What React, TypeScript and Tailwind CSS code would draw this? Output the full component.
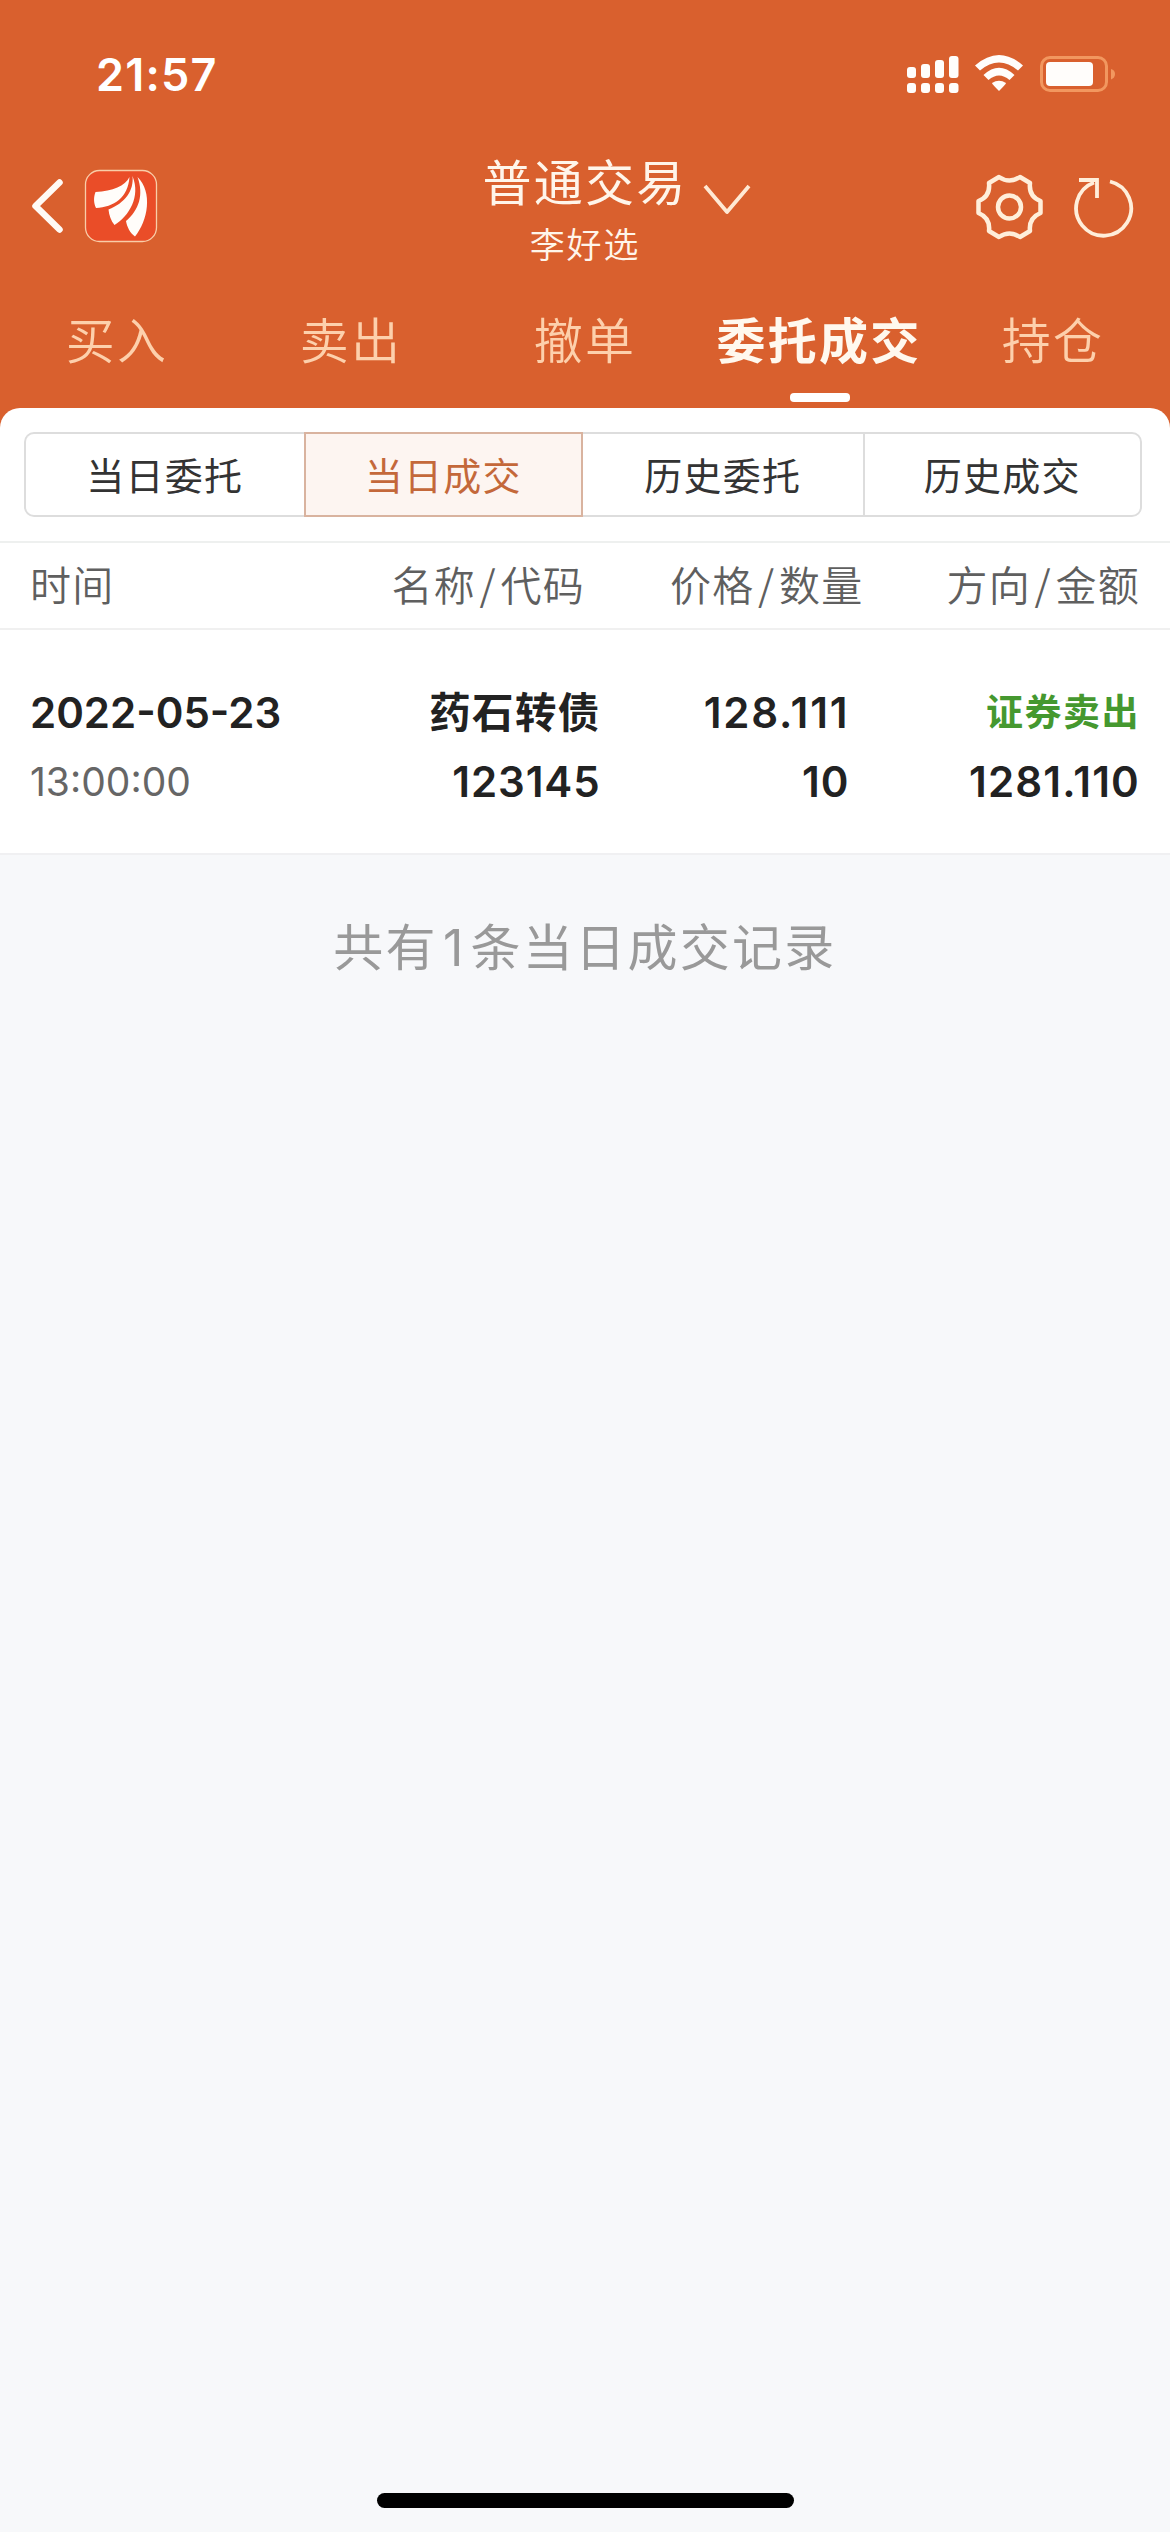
import React from "react";

const CJK = "font-['Noto_Sans_CJK_SC',sans-serif]";

function StatusBar() {
  return (
    <div className="flex h-[150px] items-start justify-between pl-[96px] pr-[54px] pt-[50px] text-white">
      <span className="text-[45px] leading-[50px] font-semibold tracking-[1.200px]">21:57</span>
      <svg width="210" height="38" viewBox="906 55 210 38" className="mt-[5px]" fill="#fffdfb">
        <rect x="907" y="67" width="9" height="11" rx="3" />
        <rect x="921" y="64" width="9" height="14" rx="3" />
        <rect x="935" y="60" width="9" height="18" rx="3" />
        <rect x="949" y="56" width="9.5" height="22" rx="3" />
        <rect x="907" y="83" width="9" height="10" rx="3" />
        <rect x="921" y="83" width="9" height="10" rx="3" />
        <rect x="935" y="83" width="9" height="10" rx="3" />
        <rect x="949" y="83" width="9.5" height="10" rx="3" />
        <path d="M975 65.5 Q999 44.500 1023 65.500 L1018 70.500 Q999 54.500 980 70.500 Z" />
        <path d="M983.500 75 Q999 60.500 1014.500 75 L1009.500 80 Q999 71 988.500 80 Z" />
        <path d="M992 83 Q999 78.500 1006 83 Q1006 84 999 91 Q992 84 992 83 Z" />
        <rect x="1041.500" y="57.500" width="65" height="33" rx="8.500" fill="none" stroke="#f2975f" strokeWidth="3" />
        <rect x="1046" y="62" width="47" height="24" rx="4" />
        <path d="M1111 69 Q1115 70 1115 74 Q1115 78 1111 79.500 Z" fill="#f2975f" />
      </svg>
    </div>
  );
}

function NavBar() {
  return (
    <div className="grid h-[134px] grid-cols-[1fr_auto_1fr] items-start">
      <div className="flex items-center pl-[30px] pt-[19px]">
        <svg width="36" height="60" viewBox="0 0 36 60" fill="none" stroke="#fffaf5" strokeWidth="6.500" strokeLinecap="round" strokeLinejoin="round">
          <path d="M29.500 6.500 L5.500 30 L29.500 53.500" />
        </svg>
        <svg width="74" height="74" viewBox="84 169 74 74" className="ml-[18px]">
          <rect x="85.500" y="170.500" width="71" height="71" rx="14" fill="#ea4d28" stroke="#f9cda8" strokeWidth="1.300" />
          <g fill="#fffdfa">
            <path d="M129.500 177 C125 186 113 191 95.500 192 C93.500 197 93.500 203 96 208 C114 207 128 198 129.500 177 Z" />
            <path d="M132.500 176 C134 191 125 203 108.500 209.500 C109 215 111 221 114.500 225 C129 216 141 197 132.500 176 Z" />
            <path d="M137.500 177 C144 195 139 210 126 221 C127 227 130 233 135 236.500 C148 221 153 192 137.500 177 Z" />
          </g>
        </svg>
      </div>

      <div className={`relative flex flex-col items-center text-[#fff5ea] ${CJK}`}>
        <div className="text-[49px] leading-[60px] font-normal tracking-[2.200px]">普通交易</div>
        <div className="mt-[8px] text-[35px] leading-[50px] font-[350] tracking-[1.800px]">李好选</div>
        <svg className="absolute left-[218px] top-[32px]" width="52" height="36" viewBox="0 0 52 36" fill="none" stroke="#ffe9d4" strokeWidth="3.800" strokeLinejoin="round">
          <path d="M4 4 L26 30 L48 4" />
        </svg>
      </div>

      <div className="flex justify-end pr-[34px] pt-[22px]">
        <svg width="160" height="70" viewBox="976 172 160 70" fill="none" stroke="#ffeeda" strokeWidth="4.500">
          <path
            d="M999 177 Q1009.500 184 1020 177 L1030 183 Q1028.500 196.500 1040.500 201 L1040.500 213 Q1028.500 218 1030 231 L1020 237 Q1009.500 230 999 237 L989 231 Q990.500 218 978.500 213 L978.500 201 Q990.500 196.500 989 183 Z"
            strokeLinejoin="round"
          />
          <circle cx="1009.500" cy="207" r="11.500" />
          <path d="M1110 181.500 A27.500 27.500 0 1 1 1094 182.500" strokeWidth="3.800" />
          <path d="M1079 180 H1097 V198" strokeWidth="3.800" />
        </svg>
      </div>
    </div>
  );
}

const tabs = ["买入", "卖出", "撤单", "委托成交", "持仓"];

function Tabs() {
  return (
    <div className={`grid h-[124px] grid-cols-5 ${CJK}`}>
      {tabs.map((t, i) => (
        <div key={t} className="flex flex-col items-center pt-[19px]">
          <span
            className={
              i === 3
                ? "whitespace-nowrap text-[49px] leading-[70px] font-bold tracking-[2.200px] text-[#fff8ee]"
                : "whitespace-nowrap text-[49px] leading-[70px] font-[350] tracking-[2.200px] text-[#fdd0ac]"
            }
          >
            {t}
          </span>
          {i === 3 && <span className="mt-[20px] ml-[2px] h-[9px] w-[60px] rounded-[4px] bg-white" />}
        </div>
      ))}
    </div>
  );
}

const segments = ["当日委托", "当日成交", "历史委托", "历史成交"];

function Segments() {
  return (
    <div className="pt-[24px] pr-[28px] pb-[24px] pl-[24px]">
      <div className={`grid h-[85px] grid-cols-4 text-[38px] font-normal tracking-[1.300px] ${CJK}`}>
        {segments.map((s, i) => (
          <div
            key={s}
            className={[
              "flex items-center justify-center pb-[3px]",
              i === 0 ? "rounded-l-[10px] border-2 border-r-0 border-[#dddddd] text-[#333]" : "",
              i === 1 ? "border-2 border-[#d9b39f] bg-[#fdf5f1] text-[#c4683a]" : "",
              i === 2 ? "border-y-2 border-[#dddddd] text-[#333]" : "",
              i === 3 ? "rounded-r-[10px] border-2 border-[#dddddd] text-[#333]" : "",
            ].join(" ")}
          >
            {s}
          </div>
        ))}
      </div>
    </div>
  );
}

function Pair({ a, b }: { a: string; b: string }) {
  return (
    <>
      {a}
      <span className="mx-[3.500px]">/</span>
      {b}
    </>
  );
}

function Table() {
  return (
    <>
      <div className={`flex h-[89px] border-y-2 border-b-[#f0f0f0] border-t-[#eef0ef] px-[30px] text-[41px] leading-[81px] font-[350] tracking-[1.300px] text-[#5f5f5f] ${CJK}`}>
        <div className="w-[230px]">时间</div>
        <div className="w-[326px] text-right"><Pair a="名称" b="代码" /></div>
        <div className="w-[279px] text-right"><Pair a="价格" b="数量" /></div>
        <div className="w-[277px] text-right"><Pair a="方向" b="金额" /></div>
      </div>
      <div className="flex h-[225px] border-b-2 border-[#f0f0f2] px-[30px] pt-[50px] text-[42px] font-semibold text-[#222] *:flex *:flex-col">
        <div className="w-[260px]">
          <span className="leading-[66px]">2022-05-23</span>
          <span className="mt-[3px] text-[39px] leading-[66px] font-normal text-[#666]">13:00:00</span>
        </div>
        <div className="w-[311px] items-end">
          <span className={`-mt-[3px] text-[41.500px] leading-[66px] font-bold tracking-[1.300px] ${CJK}`}>药石转债</span>
          <span className="mt-[6px] leading-[66px] tracking-[0.900px]">123145</span>
        </div>
        <div className="w-[249px] items-end">
          <span className="leading-[66px] tracking-[1.800px]">128.111</span>
          <span className="mt-[3px] leading-[66px] tracking-[0.900px]">10</span>
        </div>
        <div className="w-[291px] items-end">
          <span className={`-mt-[3px] text-[37px] leading-[66px] font-bold tracking-[1.500px] text-[#45982f] ${CJK}`}>证券卖出</span>
          <span className="mt-[6px] leading-[66px] tracking-[1.200px]">1281.110</span>
        </div>
      </div>
    </>
  );
}

export default function App() {
  return (
    <div className="flex h-[2532px] w-[1170px] flex-col overflow-hidden bg-[#f7f8fa] font-['Inter','Noto_Sans_CJK_SC',sans-serif]">
      <div className="bg-[#d9602e]">
        <StatusBar />
        <NavBar />
        <Tabs />
        <div className="rounded-t-[20px] bg-white">
          <Segments />
          <Table />
        </div>
      </div>
      <div className={`pt-[54px] text-center text-[50px] leading-[70px] font-normal tracking-[2.300px] text-[#999] ${CJK}`}>
        共有<span className="mx-[5px] font-['Inter']">1</span>条当日成交记录
      </div>
      <div className="mt-auto mb-[24px] h-[15px] w-[417px] self-center rounded-full bg-black" />
    </div>
  );
}
